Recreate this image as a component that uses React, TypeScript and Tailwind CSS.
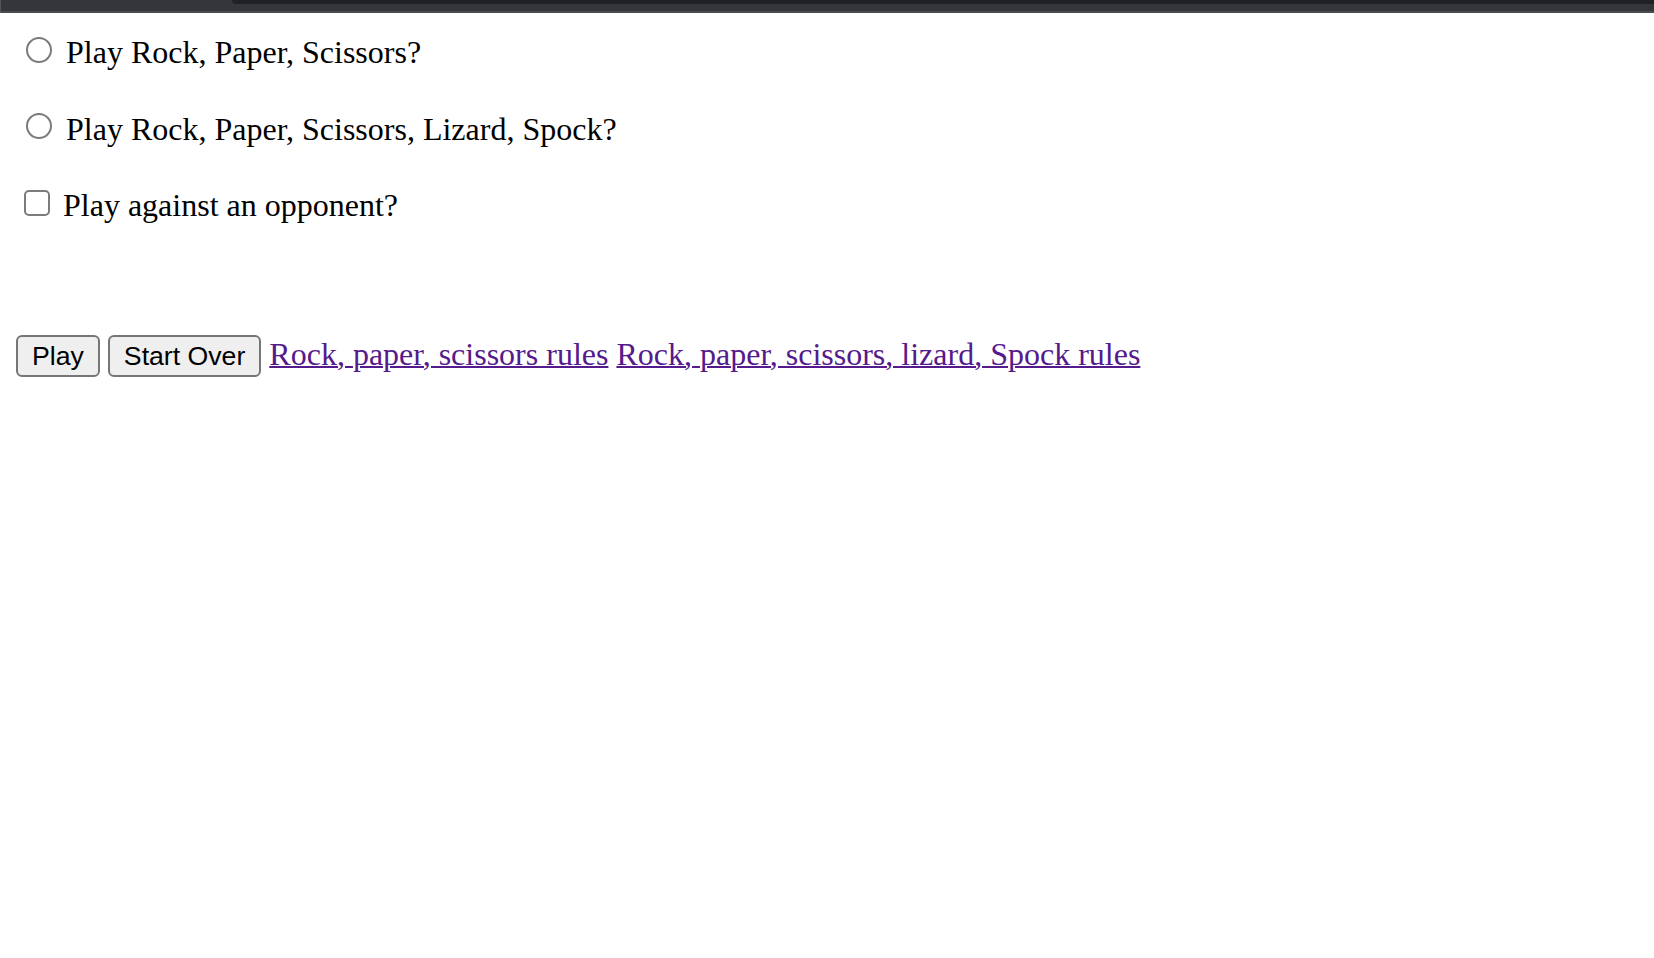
import React from "react";

export default function App() {
  return (
    <div className="min-h-[958px] w-full bg-white text-black" style={{ fontFamily: '"Liberation Serif", "Times New Roman", serif' }}>
      {/* browser chrome remnant */}
      <div className="flex h-[13px] flex-col bg-[#35363a] border-l border-[#55565a]">
        <div className="flex h-[4px]">
          <div className="w-[231px]" />
          <div className="flex-1 rounded-bl-[8px] bg-[#202124]" />
        </div>
        <div className="flex-1" />
        <div className="h-[2px] bg-[#4b4c50]" />
      </div>

      <div className="px-[16px] pt-[21px]">
        <div className="flex flex-col gap-[40px] text-[32px] leading-[36.5px]">
          <label className="flex items-center">
            <input
              type="radio"
              name="game"
              className="ml-[10px] mb-[5px] h-[26px] w-[26px] appearance-none rounded-full border-2 border-[#7b7b7b] bg-white"
            />
            <span className="ml-[14px]">Play Rock, Paper, Scissors?</span>
          </label>
          <label className="flex items-center">
            <input
              type="radio"
              name="game"
              className="ml-[10px] mb-[5px] h-[26px] w-[26px] appearance-none rounded-full border-2 border-[#7b7b7b] bg-white"
            />
            <span className="ml-[14px]">Play Rock, Paper, Scissors, Lizard, Spock?</span>
          </label>
          <label className="flex items-center">
            <input
              type="checkbox"
              className="ml-[8px] mb-[4px] h-[26px] w-[26px] appearance-none rounded-[5px] border-2 border-[#7b7b7b] bg-white"
            />
            <span className="ml-[13px]">Play against an opponent?</span>
          </label>
        </div>

        <div className="mt-[107.5px] flex items-center gap-[8px] text-[32px] leading-[36.5px]">
          <button
            className="mt-[4px] flex h-[42px] items-center justify-center rounded-[6px] border-2 border-[#767676] bg-[#efefef] px-[14px] text-[26.67px] leading-none text-black"
            style={{ fontFamily: '"Liberation Sans", Arial, sans-serif' }}
          >
            Play
          </button>
          <button
            className="mt-[4px] flex h-[42px] items-center justify-center rounded-[6px] border-2 border-[#767676] bg-[#efefef] px-[14px] text-[26.67px] leading-none text-black"
            style={{ fontFamily: '"Liberation Sans", Arial, sans-serif' }}
          >
            Start Over
          </button>
          <a href="#rps" className="text-[#551a8b] underline decoration-[2px]">
            Rock, paper, scissors rules
          </a>
          <a href="#rpsls" className="text-[#551a8b] underline decoration-[2px]">
            Rock, paper, scissors, lizard, Spock rules
          </a>
        </div>
      </div>
    </div>
  );
}
